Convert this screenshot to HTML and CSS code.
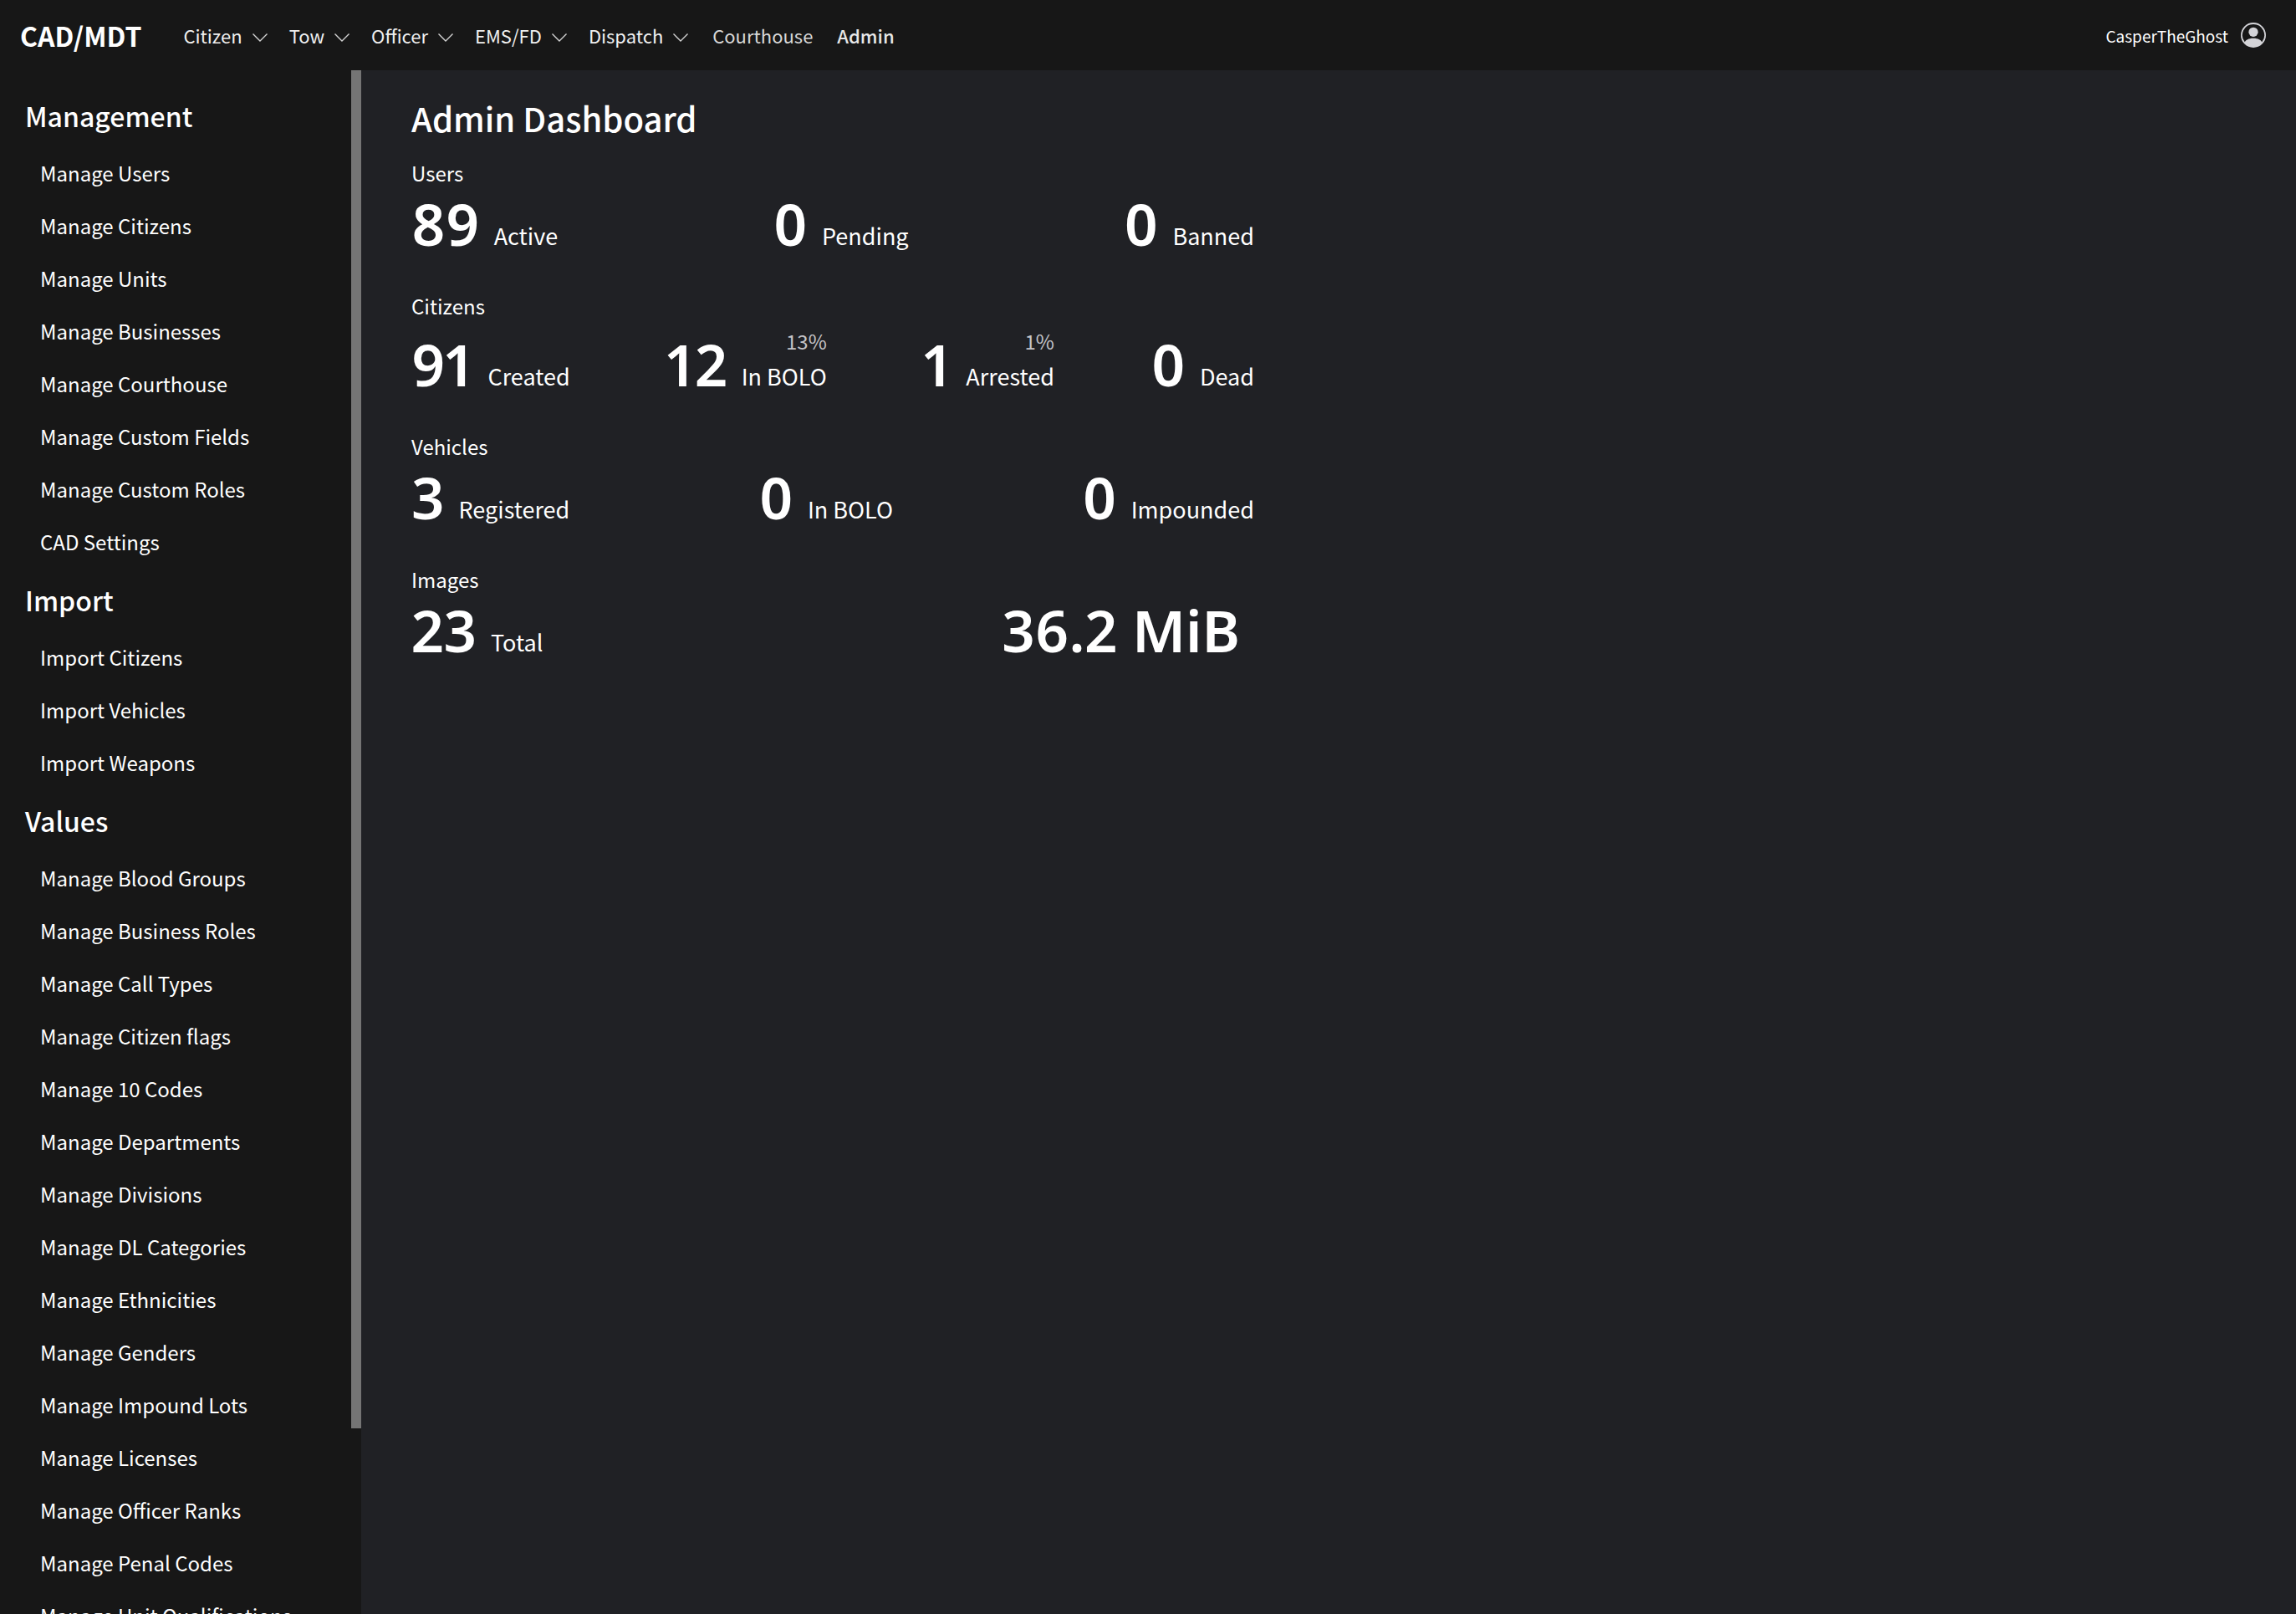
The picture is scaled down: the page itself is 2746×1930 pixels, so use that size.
FILE: index.html
```html
<!DOCTYPE html>
<html lang="en">
<head>
<meta charset="utf-8">
<title>Admin Dashboard - CAD/MDT</title>
<link rel="stylesheet" href="styles.css">
</head>
<body>
<header class="topbar">
  <a class="brand" href="#">CAD/MDT</a>
  <nav class="nav" aria-label="Main">
    <button class="nav-menu" type="button">Citizen <svg class="chevron" viewBox="0 0 18 16" aria-hidden="true"><path d="M.5 6.500l8.500 8.500 8.500-8.500"/></svg></button>
    <button class="nav-menu" type="button">Tow <svg class="chevron" viewBox="0 0 18 16" aria-hidden="true"><path d="M.5 6.500l8.500 8.500 8.500-8.500"/></svg></button>
    <button class="nav-menu" type="button">Officer <svg class="chevron" viewBox="0 0 18 16" aria-hidden="true"><path d="M.5 6.500l8.500 8.500 8.500-8.500"/></svg></button>
    <button class="nav-menu" type="button">EMS/FD <svg class="chevron" viewBox="0 0 18 16" aria-hidden="true"><path d="M.5 6.500l8.500 8.500 8.500-8.500"/></svg></button>
    <button class="nav-menu" type="button">Dispatch <svg class="chevron" viewBox="0 0 18 16" aria-hidden="true"><path d="M.5 6.500l8.500 8.500 8.500-8.500"/></svg></button>
    <a class="nav-link" href="#">Courthouse</a>
    <a class="nav-link nav-link-active" href="#">Admin</a>
  </nav>
  <button class="account" type="button">CasperTheGhost
    <svg class="avatar" viewBox="0 0 16 16" aria-hidden="true"><path d="M11 6a3 3 0 1 1-6 0 3 3 0 0 1 6 0z"/><path fill-rule="evenodd" d="M0 8a8 8 0 1 1 16 0A8 8 0 0 1 0 8zm8-7a7 7 0 0 0-5.468 11.37C3.242 11.226 4.805 10 8 10s4.757 1.225 5.468 2.37A7 7 0 0 0 8 1z"/></svg>
  </button>
</header>
<div class="layout">
  <aside class="sidebar">
    <nav class="menu" aria-label="Admin">
      <section>
        <h2 class="menu-title">Management</h2>
        <ul class="menu-list">
          <li><a href="#">Manage Users</a></li>
          <li><a href="#">Manage Citizens</a></li>
          <li><a href="#">Manage Units</a></li>
          <li><a href="#">Manage Businesses</a></li>
          <li><a href="#">Manage Courthouse</a></li>
          <li><a href="#">Manage Custom Fields</a></li>
          <li><a href="#">Manage Custom Roles</a></li>
          <li><a href="#">CAD Settings</a></li>
        </ul>
      </section>
      <section>
        <h2 class="menu-title">Import</h2>
        <ul class="menu-list">
          <li><a href="#">Import Citizens</a></li>
          <li><a href="#">Import Vehicles</a></li>
          <li><a href="#">Import Weapons</a></li>
        </ul>
      </section>
      <section>
        <h2 class="menu-title">Values</h2>
        <ul class="menu-list">
          <li><a href="#">Manage Blood Groups</a></li>
          <li><a href="#">Manage Business Roles</a></li>
          <li><a href="#">Manage Call Types</a></li>
          <li><a href="#">Manage Citizen flags</a></li>
          <li><a href="#">Manage 10 Codes</a></li>
          <li><a href="#">Manage Departments</a></li>
          <li><a href="#">Manage Divisions</a></li>
          <li><a href="#">Manage DL Categories</a></li>
          <li><a href="#">Manage Ethnicities</a></li>
          <li><a href="#">Manage Genders</a></li>
          <li><a href="#">Manage Impound Lots</a></li>
          <li><a href="#">Manage Licenses</a></li>
          <li><a href="#">Manage Officer Ranks</a></li>
          <li><a href="#">Manage Penal Codes</a></li>
          <li><a href="#">Manage Unit Qualifications</a></li>
        </ul>
      </section>
    </nav>
    <div class="scrollbar"><div class="scrollbar-thumb"></div></div>
  </aside>
  <main class="main">
    <h1 class="page-title">Admin Dashboard</h1>
    <section class="group">
      <h2 class="group-title">Users</h2>
      <div class="stats">
        <p class="stat"><span class="number">89</span><span class="label">Active</span></p>
        <p class="stat"><span class="number">0</span><span class="label">Pending</span></p>
        <p class="stat"><span class="number">0</span><span class="label">Banned</span></p>
      </div>
    </section>
    <section class="group">
      <h2 class="group-title">Citizens</h2>
      <div class="stats">
        <p class="stat"><span class="number">91</span><span class="label">Created</span></p>
        <p class="stat"><span class="number">12</span><span class="label"><span class="percent">13%</span>In BOLO</span></p>
        <p class="stat"><span class="number">1</span><span class="label"><span class="percent">1%</span>Arrested</span></p>
        <p class="stat"><span class="number">0</span><span class="label">Dead</span></p>
      </div>
    </section>
    <section class="group">
      <h2 class="group-title">Vehicles</h2>
      <div class="stats">
        <p class="stat"><span class="number">3</span><span class="label">Registered</span></p>
        <p class="stat"><span class="number">0</span><span class="label">In BOLO</span></p>
        <p class="stat"><span class="number">0</span><span class="label">Impounded</span></p>
      </div>
    </section>
    <section class="group">
      <h2 class="group-title">Images</h2>
      <div class="stats">
        <p class="stat"><span class="number">23</span><span class="label">Total</span></p>
        <p class="stat"><span class="number">36.2 MiB</span></p>
      </div>
    </section>
  </main>
</div>
</body>
</html>
```
FILE: styles.css
```css
* { box-sizing: border-box; }

body {
  margin: 0;
  height: 100vh;
  display: flex;
  flex-direction: column;
  overflow: hidden;
  background: #202125;
  color: #fff;
  font-family: "Noto Sans CJK JP", "Noto Sans", sans-serif;
  font-size: 24px;
}

h1, h2, p, ul { margin: 0; padding: 0; }
ul { list-style: none; }
a { color: inherit; text-decoration: none; }
button {
  padding: 0;
  border: 0;
  background: none;
  color: inherit;
  font: inherit;
  cursor: pointer;
}

/* Top bar */
.topbar {
  flex: none;
  height: 84px;
  display: flex;
  align-items: center;
  padding: 0 36px 0 24px;
  background: #171717;
}
.brand {
  margin-right: 50px;
  font-size: 32px;
  font-weight: 700;
}
.nav {
  display: flex;
  align-items: center;
  gap: 26px;
  font-size: 22px;
  line-height: 36px;
}
.nav-menu {
  display: flex;
  align-items: center;
  gap: 12px;
  color: #f0f0f0;
}
.chevron {
  width: 18px;
  height: 16px;
  fill: none;
  stroke: #d4d4d4;
  stroke-width: 1.4;
}
.nav-link { padding-left: 3px; color: #d8d8d8; }
.nav-link-active { color: #e8e8e8; font-weight: 500; }
.account {
  margin-left: auto;
  display: flex;
  align-items: center;
  gap: 15px;
  font-size: 19px;
}
.avatar {
  width: 30px;
  height: 30px;
  fill: #d4d4d8;
}

/* Sidebar */
.layout {
  flex: 1;
  min-height: 0;
  display: flex;
}
.sidebar {
  flex: none;
  width: 432px;
  display: flex;
  overflow: hidden;
  background: #171717;
}
.menu {
  flex: 1;
  display: flex;
  flex-direction: column;
  gap: 13px;
  padding-top: 29px;
}
.menu-title {
  margin-bottom: 12px;
  padding-left: 30px;
  font-size: 32px;
  font-weight: 500;
  line-height: 50px;
}
.menu-list a {
  display: block;
  padding-left: 48px;
  line-height: 63px;
}
.scrollbar { width: 12px; }
.scrollbar-thumb {
  height: 88%;
  background: #757575;
}

/* Dashboard */
.main {
  flex: 1;
  padding: 29px 60px;
}
.page-title {
  margin-bottom: 19px;
  font-size: 40px;
  font-weight: 500;
  line-height: 56px;
}
.group {
  max-width: 1008px;
  margin-bottom: 38px;
}
.group-title {
  font-size: 24px;
  font-weight: 400;
  line-height: 37px;
}
.stats {
  display: flex;
  align-items: flex-end;
  justify-content: space-between;
}
.stat {
  display: flex;
  align-items: flex-end;
}
.number {
  margin-right: 17px;
  font-family: "Noto Sans", sans-serif;
  font-size: 69px;
  font-weight: 600;
  font-variant-numeric: proportional-nums;
  line-height: 84px;
}
.label {
  display: flex;
  flex-direction: column;
  align-items: flex-end;
  padding-bottom: 8px;
  font-size: 27px;
  line-height: 38px;
}
.percent {
  color: #c4c4c8;
  font-size: 24px;
  line-height: 47px;
}
```
